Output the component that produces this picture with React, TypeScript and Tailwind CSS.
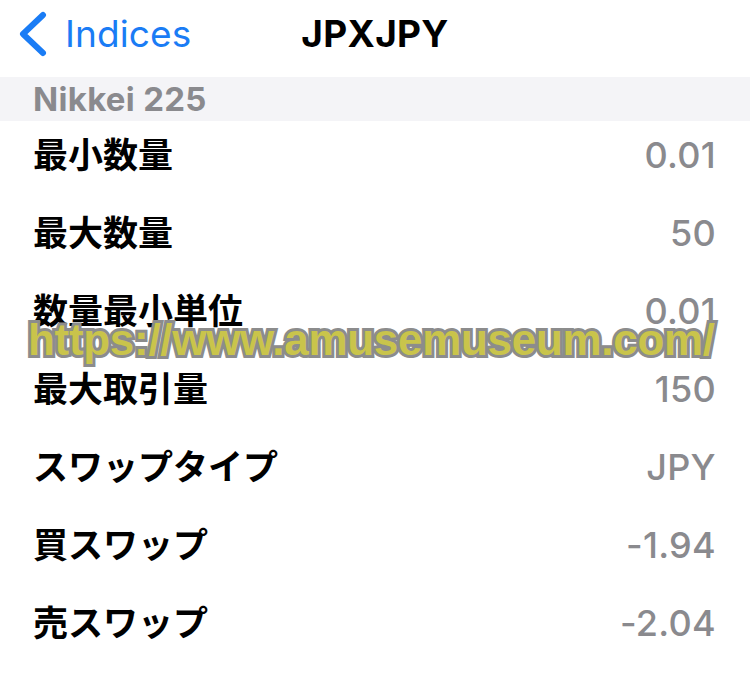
import React from "react";

const rows: { label: string; value: string }[] = [
  { label: "最小数量", value: "0.01" },
  { label: "最大数量", value: "50" },
  { label: "数量最小単位", value: "0.01" },
  { label: "最大取引量", value: "150" },
  { label: "スワップタイプ", value: "JPY" },
  { label: "買スワップ", value: "-1.94" },
  { label: "売スワップ", value: "-2.04" },
];

export default function App() {
  return (
    <div className="relative w-[750px] h-[699px] overflow-hidden bg-white font-['Inter','Noto_Sans_CJK_JP',sans-serif]">
      {/* Nav bar */}
      <div className="relative flex h-[77px] items-center">
        <div className="flex items-center pl-[17px] pb-[10px] text-[#1a7cf5]">
          <svg width="31" height="46" viewBox="0 0 31 46" fill="none">
            <path d="M26 4 L6 23 L26 42" stroke="currentColor" strokeWidth="6" strokeLinecap="round" strokeLinejoin="round" />
          </svg>
          <span className="ml-[17px] text-[37px] leading-none tracking-[0.1px]">Indices</span>
        </div>
        <div className="absolute inset-x-0 top-0 flex h-[67px] items-center justify-center">
          <span className="text-[37px] font-bold leading-none tracking-[0.3px] text-black">JPXJPY</span>
        </div>
      </div>

      {/* Section header */}
      <div className="flex h-[44px] items-center bg-[#f4f4f7] pl-[33px]">
        <span className="text-[33px] font-bold leading-none tracking-[0.3px] text-[#8a8a8e]">Nikkei 225</span>
      </div>

      {/* Rows */}
      <div className="flex flex-col">
        {rows.map((r) => (
          <div key={r.label} className="flex h-[78px] items-center justify-between pl-[33px] pr-[34px] pb-[10px]">
            <span className="text-[35px] font-bold leading-none text-black">{r.label}</span>
            <span className="text-[36px] font-medium leading-none tracking-[0.3px] text-[#8a8a8e]">{r.value}</span>
          </div>
        ))}
      </div>

      {/* Watermark */}
      <div className="absolute left-[28px] top-[318px] text-[44px] font-bold leading-none tracking-[-0.3px] text-[#c9c44b] [-webkit-text-stroke:6px_#8c8c8c] [paint-order:stroke_fill] font-['Liberation_Sans',sans-serif]">
        https://www.amusemuseum.com/
      </div>
    </div>
  );
}
